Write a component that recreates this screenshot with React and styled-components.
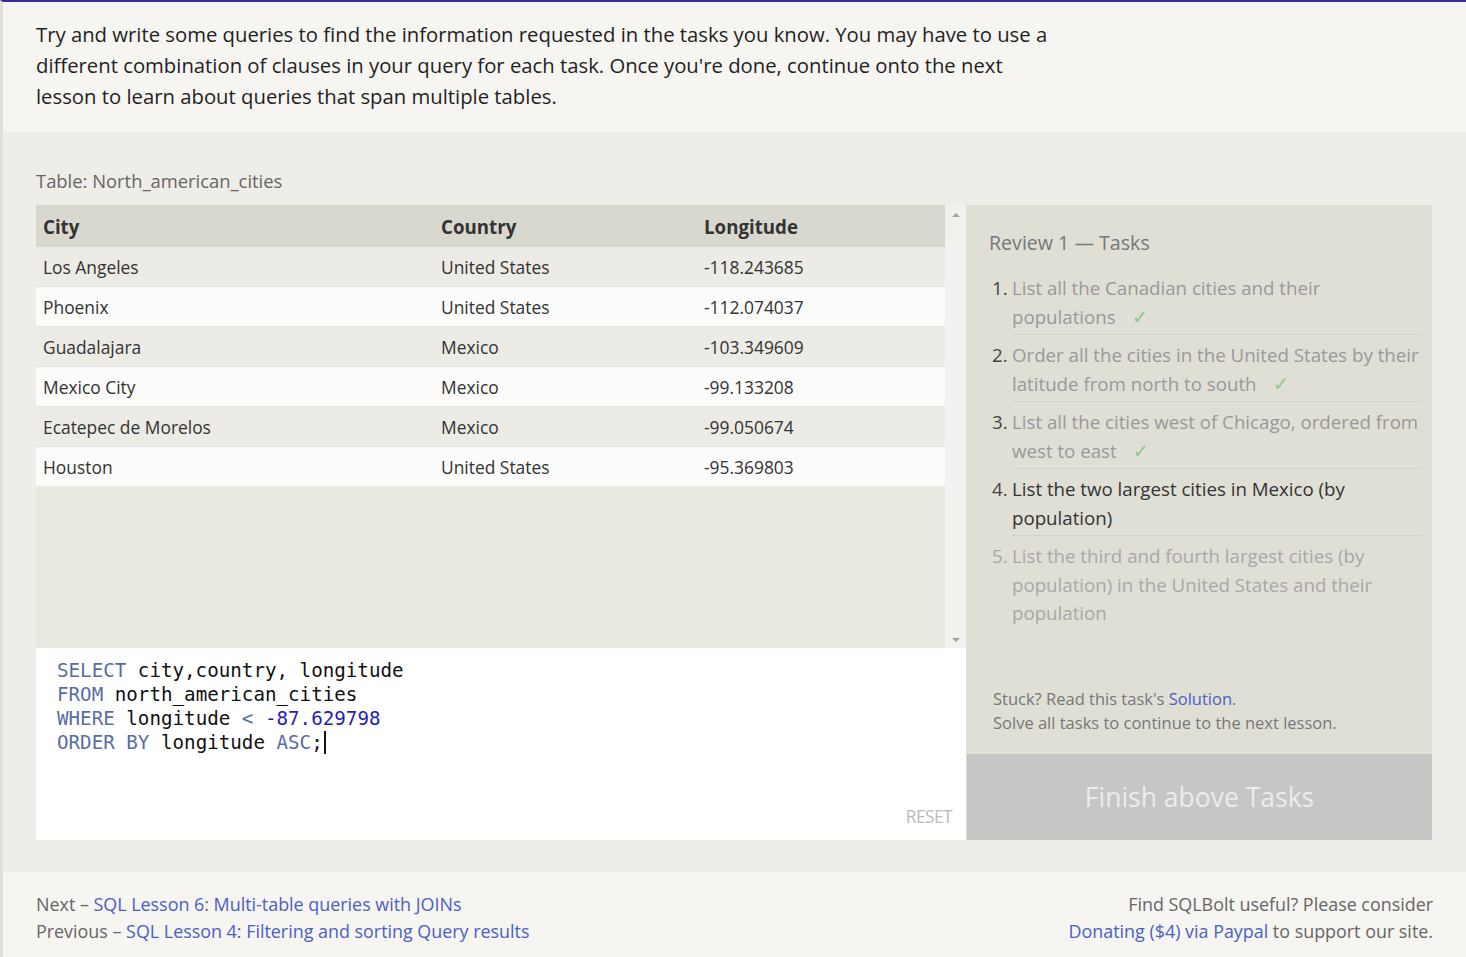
import styled, { createGlobalStyle } from 'styled-components';

const GlobalStyle = createGlobalStyle`
    html, body {
        margin: 0;
        padding: 0;
        background: #f6f5f2;
    }
    body {
        font-family: "Open Sans", "Noto Sans", sans-serif;
        color: #222;
    }
`;

const Page = styled.div`
    border-top: 2px solid #3b2ba0;
    border-left: 3px solid #e2dfd9;
    min-height: 955px;
    box-sizing: border-box;
`;

const Intro = styled.div`
    background: #f6f5f2;
    padding: 17px 33px 22px;
    height: 130px;
    box-sizing: border-box;
`;

const IntroText = styled.p`
    margin: 0;
    max-width: 1022px;
    font-size: 20.3px;
    line-height: 31px;
    color: #1f1f1f;
`;

const Exercise = styled.div`
    background: #efede7;
    padding: 36px 34px 32px 33px;
    height: 740px;
    box-sizing: border-box;
`;

const TableLabel = styled.div`
    font-size: 18.4px;
    line-height: 26px;
    color: #666;
    margin-bottom: 11px;
`;

const Workspace = styled.div`
    display: grid;
    grid-template-columns: 930px 466px;
    height: 635px;
`;

const LeftColumn = styled.div`
    display: flex;
    flex-direction: column;
`;

const TableWrap = styled.div`
    display: flex;
    height: 443px;
    background: #e9e8e1;
`;

const Table = styled.div`
    flex: 1;
    display: flex;
    flex-direction: column;
`;

const Row = styled.div`
    display: grid;
    grid-template-columns: 398px 263px 1fr;
    height: ${(p) => (p.$head ? '42px' : '40px')};
    align-items: center;
    background: ${(p) => (p.$head ? '#d9d8ce' : p.$odd ? '#ecebe5' : '#fbfbfa')};
    border-bottom: ${(p) => (p.$head ? 'none' : '1px solid #e6e5df')};
    box-sizing: border-box;
`;

const Cell = styled.div`
    padding-left: 7px;
    font-size: ${(p) => (p.$head ? '18.7px' : '17.4px')};
    font-weight: ${(p) => (p.$head ? 700 : 400)};
    color: #333;
    white-space: nowrap;
`;

const Scrollbar = styled.div`
    width: 21px;
    background: #f1f1f0;
    display: flex;
    flex-direction: column;
    justify-content: space-between;
    align-items: center;
    padding: 8px 0 6px;
    box-sizing: border-box;
`;

const Arrow = styled.div`
    width: 0;
    height: 0;
    border-left: 4.5px solid transparent;
    border-right: 4.5px solid transparent;
    ${(p) => (p.$down ? 'border-top: 4.5px solid #a3a3a3;' : 'border-bottom: 4.5px solid #a3a3a3;')}
`;

const Editor = styled.div`
    flex: 1;
    background: #fff;
    padding: 11px 14px 12px 21px;
    display: flex;
    flex-direction: column;
    justify-content: space-between;
    box-sizing: border-box;
`;

const Code = styled.pre`
    margin: 0;
    font-family: "DejaVu Sans Mono", "Liberation Mono", monospace;
    font-size: 19.2px;
    line-height: 24px;
    color: #111;
`;

const Kw = styled.span`
    color: ${(p) => (p.$num ? '#2a1cb5' : '#5b6ca5')};
`;

const Caret = styled.span`
    display: inline-block;
    width: 2px;
    height: 23px;
    background: #111;
    vertical-align: -5px;
    margin-left: 1px;
`;

const Reset = styled.div`
    align-self: flex-end;
    font-size: 17.4px;
    color: #bbb;
    letter-spacing: -0.6px;
`;

const TaskPanel = styled.div`
    background: #e0dfd5;
    display: flex;
    flex-direction: column;
`;

const TaskBody = styled.div`
    padding: 24px 10px 0 23px;
    flex: 1;
    display: flex;
    flex-direction: column;
`;

const TaskTitle = styled.div`
    font-size: 19.6px;
    line-height: 28px;
    color: #777;
    margin-bottom: 11px;
`;

const TaskList = styled.ol`
    list-style: none;
    margin: 0;
    padding: 0 0 0 3px;
`;

const Task = styled.li`
    display: flex;
    font-size: 18.7px;
    line-height: 28.5px;
`;

const TaskNum = styled.span`
    width: 20px;
    flex-shrink: 0;
    padding-top: 6px;
    color: ${(p) => (p.$state === 'todo' ? '#a8a8a8' : '#444')};
`;

const TaskText = styled.span`
    flex: 1;
    padding: 6px 0 3px;
    border-bottom: ${(p) => (p.$last ? 'none' : '1px solid #d3d2c8')};
    color: ${(p) => (p.$state === 'active' ? '#333' : p.$state === 'todo' ? '#a8a8a8' : '#999')};
`;

const Check = styled.span`
    color: #93c793;
    margin-left: 16px;
    font-family: "DejaVu Sans", sans-serif;
    font-size: 20px;
    line-height: 1;
`;

const Hint = styled.div`
    margin-top: auto;
    margin-bottom: 19px;
    padding-left: 4px;
    font-size: 16.5px;
    line-height: 24px;
    color: #777;
`;

const Link = styled.a`
    color: #4a60c4;
    text-decoration: none;
`;

const FinishButton = styled.div`
    height: 86px;
    background: #c6c6c6;
    color: #ececec;
    font-size: 26.5px;
    display: flex;
    align-items: center;
    justify-content: center;
    margin-left: 1px;
`;

const Footer = styled.div`
    background: #f6f5f2;
    padding: 19px 33px 0;
    height: 85px;
    box-sizing: border-box;
    display: flex;
    justify-content: space-between;
    font-size: 17.9px;
    line-height: 27px;
    color: #666;
`;

const FooterRight = styled.div`
    text-align: right;
`;

const rows = [
    ['Los Angeles', 'United States', '-118.243685'],
    ['Phoenix', 'United States', '-112.074037'],
    ['Guadalajara', 'Mexico', '-103.349609'],
    ['Mexico City', 'Mexico', '-99.133208'],
    ['Ecatepec de Morelos', 'Mexico', '-99.050674'],
    ['Houston', 'United States', '-95.369803'],
];

const tasks = [
    { text: 'List all the Canadian cities and their populations', state: 'done' },
    { text: 'Order all the cities in the United States by their latitude from north to south', state: 'done' },
    { text: 'List all the cities west of Chicago, ordered from west to east', state: 'done' },
    { text: 'List the two largest cities in Mexico (by population)', state: 'active' },
    { text: 'List the third and fourth largest cities (by population) in the United States and their population', state: 'todo' },
];

function App() {
    return (
        <Page>
            <GlobalStyle />
            <Intro>
                <IntroText>
                    Try and write some queries to find the information requested in the tasks you know. You may have to
                    use a different combination of clauses in your query for each task. Once you're done, continue onto
                    the next lesson to learn about queries that span multiple tables.
                </IntroText>
            </Intro>

            <Exercise>
                <TableLabel>Table: North_american_cities</TableLabel>
                <Workspace>
                    <LeftColumn>
                        <TableWrap>
                            <Table>
                                <Row $head>
                                    <Cell $head>City</Cell>
                                    <Cell $head>Country</Cell>
                                    <Cell $head>Longitude</Cell>
                                </Row>
                                {rows.map((r, i) => (
                                    <Row key={r[0]} $odd={i % 2 === 0}>
                                        {r.map((c) => (
                                            <Cell key={c}>{c}</Cell>
                                        ))}
                                    </Row>
                                ))}
                            </Table>
                            <Scrollbar>
                                <Arrow />
                                <Arrow $down />
                            </Scrollbar>
                        </TableWrap>
                        <Editor>
                            <Code>
                                <Kw>SELECT</Kw> city,country, longitude{'\n'}
                                <Kw>FROM</Kw> north_american_cities{'\n'}
                                <Kw>WHERE</Kw> longitude <Kw>&lt;</Kw> <Kw $num>-87.629798</Kw>{'\n'}
                                <Kw>ORDER BY</Kw> longitude <Kw>ASC</Kw>;<Caret />
                            </Code>
                            <Reset>RESET</Reset>
                        </Editor>
                    </LeftColumn>

                    <TaskPanel>
                        <TaskBody>
                            <TaskTitle>Review 1 — Tasks</TaskTitle>
                            <TaskList>
                                {tasks.map((t, i) => (
                                    <Task key={i}>
                                        <TaskNum $state={t.state}>{i + 1}.</TaskNum>
                                        <TaskText $state={t.state} $last={i === tasks.length - 1}>
                                            {t.text}
                                            {t.state === 'done' && <Check>✓</Check>}
                                        </TaskText>
                                    </Task>
                                ))}
                            </TaskList>
                            <Hint>
                                Stuck? Read this task's <Link href="#">Solution</Link>.
                                <br />
                                Solve all tasks to continue to the next lesson.
                            </Hint>
                        </TaskBody>
                        <FinishButton>Finish above Tasks</FinishButton>
                    </TaskPanel>
                </Workspace>
            </Exercise>

            <Footer>
                <div>
                    Next – <Link href="#">SQL Lesson 6: Multi-table queries with JOINs</Link>
                    <br />
                    Previous – <Link href="#">SQL Lesson 4: Filtering and sorting Query results</Link>
                </div>
                <FooterRight>
                    Find SQLBolt useful? Please consider
                    <br />
                    <Link href="#">Donating ($4) via Paypal</Link> to support our site.
                </FooterRight>
            </Footer>
        </Page>
    );
}

export default App;
